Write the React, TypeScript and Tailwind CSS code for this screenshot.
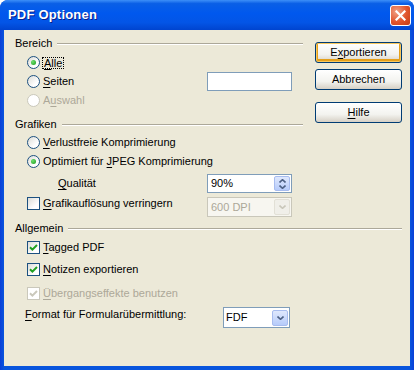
import React from "react";

const Radio = ({ checked = false, disabled = false }: { checked?: boolean; disabled?: boolean }) => (
    <span
        className={`relative w-[13px] h-[13px] rounded-full border flex items-center justify-center shrink-0 ${
            disabled
                ? "border-[#cac8bb] bg-white"
                : "border-[#1c5180] bg-[linear-gradient(135deg,#dcdcd7,#ffffff_70%)]"
        }`}
    >
        {checked && <span className="w-[5px] h-[5px] rounded-full bg-[radial-gradient(circle_at_35%_35%,#6ee06e,#1a9a1a)]" />}
    </span>
);

const Check = ({ checked = false, disabled = false }: { checked?: boolean; disabled?: boolean }) => (
    <span
        className={`w-[13px] h-[13px] border flex items-center justify-center shrink-0 ${
            disabled
                ? "border-[#cac8bb] bg-white"
                : "border-[#1c5180] bg-[linear-gradient(135deg,#dcdcd7,#ffffff_70%)]"
        }`}
    >
        {checked && (
            <svg width="9" height="9" viewBox="0 0 9 9">
                <path
                    d="M1 4.2 L3.4 6.6 L8 2"
                    fill="none"
                    stroke={disabled ? "#cac8bb" : "#21a121"}
                    strokeWidth="2"
                />
            </svg>
        )}
    </span>
);

// group header with etched line
const Header = ({ label }: { label: string }) => (
    <div className="h-[14px] flex items-center">
        <span className="pr-[5px] leading-[14px]">{label}</span>
        <div className="flex-1 border-t border-[#aca899] border-b-white border-b h-[2px] mt-[1px]" />
    </div>
);

const Mn = ({ children }: { children: React.ReactNode }) => <span className="underline underline-offset-[2px]">{children}</span>;

const Button = ({ children, isDefault = false }: { children: React.ReactNode; isDefault?: boolean }) => (
    <div
        className={`h-[21px] w-[87px] rounded-[3px] border border-[#003c74] flex items-center justify-center bg-[linear-gradient(#ffffff,#f3f3ef_60%,#d6d0c5)] ${
            isDefault ? "shadow-[inset_0_0_0_1px_#f9c85e,inset_0_-1px_0_2px_#e5a01a]" : ""
        }`}
    >
        {children}
    </div>
);

const Arrow = ({ color, up = false }: { color: string; up?: boolean }) => (
    <svg width="7" height="4" viewBox="0 0 7 4">
        <path d={up ? "M0.5 3.5 L3.5 0.7 L6.5 3.5" : "M0.5 0.5 L3.5 3.3 L6.5 0.5"} fill="none" stroke={color} strokeWidth="1.6" />
    </svg>
);

export default function App() {
    return (
        <div className="w-[419px] h-[372px] bg-white font-['Liberation_Sans',Arial,sans-serif] text-[11px] text-black">
            <div className="w-[414px] h-[370px] flex flex-col rounded-t-[8px] overflow-hidden bg-[linear-gradient(90deg,#0a3fd8,#0855dd_4px,#0855dd_calc(100%-4px),#0a3fd8)]">
                {/* title bar */}
                <div className="h-[30px] shrink-0 flex items-center pl-[8px] pr-[3px] bg-[linear-gradient(#3d8ff8,#0a5fe6_12%,#0058ee_45%,#0355e6_75%,#0044cf)]">
                    <span className="font-['Liberation_Sans',Arial,sans-serif] font-bold text-[13px] text-white [text-shadow:1px_1px_0_#0a1e8c] tracking-[0.2px]">
                        PDF Optionen
                    </span>
                    <div className="ml-auto w-[21px] h-[21px] rounded-[3px] border border-white flex items-center justify-center bg-[radial-gradient(circle_at_30%_30%,#f0a085,#e0542c_55%,#c23c15)]">
                        <svg width="11" height="11" viewBox="0 0 11 11">
                            <path d="M1.5 1.5 L9.5 9.5 M9.5 1.5 L1.5 9.5" stroke="white" strokeWidth="2.2" strokeLinecap="square" />
                        </svg>
                    </div>
                </div>

                {/* body */}
                <div className="flex-1 mx-[4px] mb-[4px] bg-[#ece9d8] pl-[11px] pr-[8px] pt-[6px] flex flex-col">
                    <div className="flex gap-[12px]">
                        {/* left column */}
                        <div className="w-[288px] flex flex-col">
                            <Header label="Bereich" />
                            <div className="mt-[3px] pl-[12px] flex flex-col">
                                <div className="h-[19px] flex items-center gap-[3px]">
                                    <Radio checked />
                                    <span className="outline-1 outline-dotted outline-black px-[1px] leading-[10px]">
                                        <Mn>A</Mn>lle
                                    </span>
                                </div>
                                <div className="h-[19px] flex items-center">
                                    <div className="w-[180px] flex items-center gap-[3px]">
                                        <Radio />
                                        <span>
                                            <Mn>S</Mn>eiten
                                        </span>
                                    </div>
                                    <div className="w-[85px] h-[19px] border border-[#7f9db9] bg-white" />
                                </div>
                                <div className="h-[19px] flex items-center gap-[3px] text-[#aca899]">
                                    <Radio disabled />
                                    <span>
                                        A<Mn>u</Mn>swahl
                                    </span>
                                </div>
                            </div>

                            <div className="mt-[7px]">
                                <Header label="Grafiken" />
                            </div>
                            <div className="mt-[2px] pl-[12px] flex flex-col">
                                <div className="h-[19px] flex items-center gap-[3px]">
                                    <Radio />
                                    <span>
                                        <Mn>V</Mn>erlustfreie Komprimierung
                                    </span>
                                </div>
                                <div className="h-[19px] flex items-center gap-[3px]">
                                    <Radio checked />
                                    <span>
                                        Optimiert für <Mn>J</Mn>PEG Komprimierung
                                    </span>
                                </div>
                                <div className="h-[21px] mt-[2px] flex items-center">
                                    <span className="w-[180px] pl-[31px]">
                                        <Mn>Q</Mn>ualität
                                    </span>
                                    <div className="w-[85px] h-[19px] border border-[#7f9db9] bg-white flex items-center pl-[3px] pr-[1px]">
                                        <span className="flex-1">90%</span>
                                        <div className="w-[16px] h-[15px] rounded-[2px] border border-[#a7bcef] bg-[linear-gradient(#dfe8fd,#b6cbfa)] flex flex-col items-center justify-center gap-[2px]">
                                            <Arrow color="#4d6185" up />
                                            <Arrow color="#4d6185" />
                                        </div>
                                    </div>
                                </div>
                                <div className="h-[21px] mt-[2px] flex items-start">
                                    <div className="w-[180px] flex items-center gap-[3px] mt-[0px] h-[14px]">
                                        <Check />
                                        <span>
                                            <Mn>G</Mn>rafikauflösung verringern
                                        </span>
                                    </div>
                                    <div className="w-[85px] h-[20px] mt-[1px] border border-[#c9c7ba] bg-[#f7f6f0] flex items-center pl-[3px] pr-[1px] text-[#aca899]">
                                        <span className="flex-1">600 DPI</span>
                                        <div className="w-[16px] h-[16px] rounded-[2px] bg-[#f0efe9] border border-[#e2e0d6] flex items-center justify-center">
                                            <Arrow color="#c9c7ba" />
                                        </div>
                                    </div>
                                </div>
                            </div>
                        </div>

                        {/* buttons */}
                        <div className="w-[87px] pt-[6px] flex flex-col">
                            <Button isDefault>
                                E<Mn>x</Mn>portieren
                            </Button>
                            <div className="mt-[6px]">
                                <Button>Abbrechen</Button>
                            </div>
                            <div className="mt-[12px]">
                                <Button>
                                    <Mn>H</Mn>ilfe
                                </Button>
                            </div>
                        </div>
                    </div>

                    <div className="mt-[4px]">
                        <Header label="Allgemein" />
                    </div>
                    <div className="mt-[2px] pl-[12px] flex flex-col">
                        <div className="h-[20px] flex items-center gap-[3px]">
                            <Check checked />
                            <span>
                                <Mn>T</Mn>agged PDF
                            </span>
                        </div>
                        <div className="h-[20px] mt-[2px] flex items-center gap-[3px]">
                            <Check checked />
                            <span>
                                <Mn>N</Mn>otizen exportieren
                            </span>
                        </div>
                        <div className="h-[20px] mt-[4px] flex items-center gap-[3px] text-[#aca899]">
                            <Check checked disabled />
                            <span>
                                <Mn>Ü</Mn>bergangseffekte benutzen
                            </span>
                        </div>
                        <div className="h-[23px] mt-[3px] flex items-center">
                            <span className="w-[198px] -ml-[2px] self-start">
                                <Mn>F</Mn>ormat für Formularübermittlung:
                            </span>
                            <div className="w-[67px] h-[21px] border border-[#7f9db9] bg-white flex items-center pl-[2px] pr-[1px]">
                                <span className="flex-1">FDF</span>
                                <div className="w-[16px] h-[16px] rounded-[2px] border border-[#a7bcef] bg-[linear-gradient(#dfe8fd,#b6cbfa)] flex items-center justify-center">
                                    <Arrow color="#4d6185" />
                                </div>
                            </div>
                        </div>
                    </div>
                </div>
            </div>
        </div>
    );
}
